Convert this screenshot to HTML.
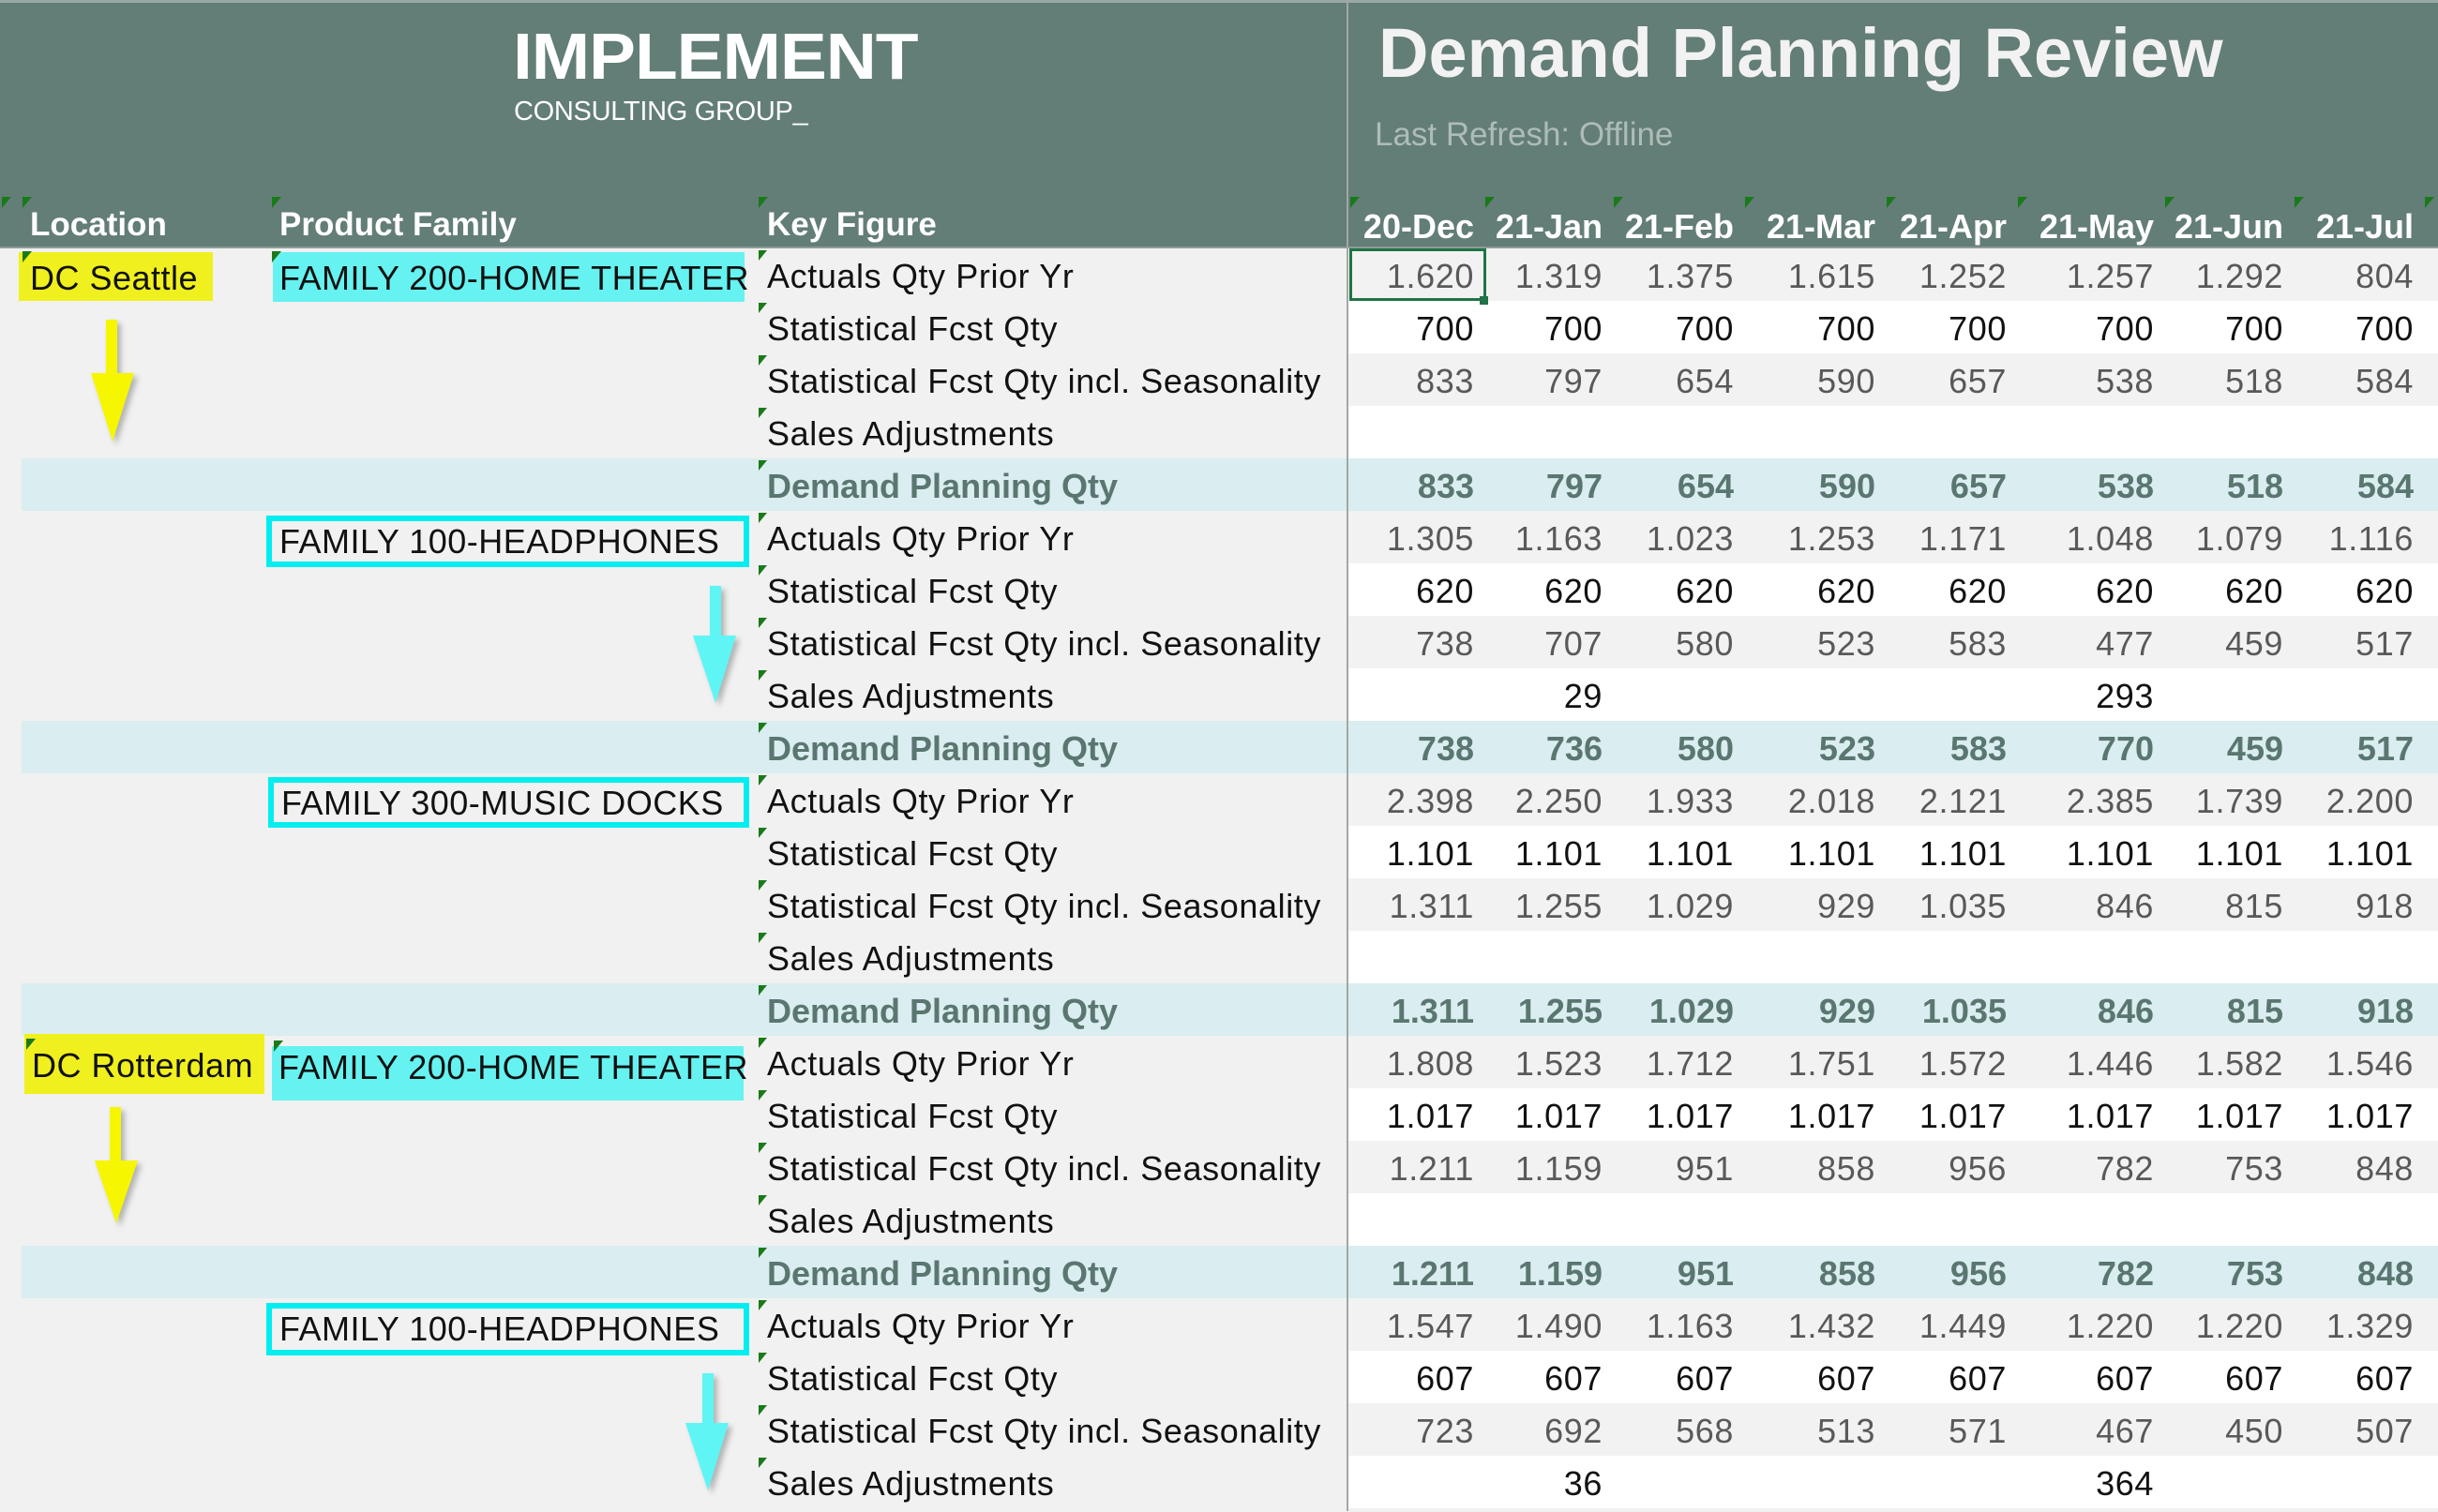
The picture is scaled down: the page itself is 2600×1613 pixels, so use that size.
<!DOCTYPE html>
<html><head><meta charset="utf-8"><style>
*{margin:0;padding:0;box-sizing:border-box}
body{width:2600px;height:1612px;overflow:hidden;background:#f0f1f0;font-family:"Liberation Sans",Arial,sans-serif;position:relative}
.hdr{position:absolute;left:0;top:0;width:2600px;height:265px;background:#637d77;border-top:3px solid #9aa8a4;border-bottom:2px solid #8d9c98}
.abs{position:absolute;white-space:nowrap}
.hl{font-weight:bold;color:#fff;font-size:35px;top:220px}
.row{position:absolute;left:0;width:2600px;height:56px}
.row .r{position:absolute;left:1437px;top:0;width:1163px;height:56px;display:flex;padding-left:3px}
.g .r{background:#f2f2f2}
.w .r{background:#fff}
.d{background:linear-gradient(to right,#f0f1f0 0,#f0f1f0 23px,#daedf0 23px)}
.d .r{background:#daedf0}
.r i{font-style:normal;display:block;text-align:right;padding-right:12px;font-size:36px;letter-spacing:.6px;line-height:60px;height:56px}
.r i:nth-child(1){width:144px}.r i:nth-child(2){width:137px}.r i:nth-child(3){width:140px}.r i:nth-child(4){width:151px}
.r i:nth-child(5){width:140px}.r i:nth-child(6){width:157px}.r i:nth-child(7){width:138px}.r i:nth-child(8){width:139px}
.g i{color:#595959}.w i{color:#111}.d i{color:#5a7670;font-weight:bold;letter-spacing:0}
.k{position:absolute;left:818px;top:0;font-size:36px;letter-spacing:.6px;line-height:60px;color:#111}
.d .k{color:#5a7670;font-weight:bold;letter-spacing:0}
.k::before{content:"";position:absolute;left:-9px;top:2px;border-top:11px solid #1a7a1a;border-right:9px solid transparent}
.tri{position:absolute;border-top:12px solid #1a7a1a;border-right:10px solid transparent}
.box{position:absolute;font-size:36px;letter-spacing:.5px;color:#111;white-space:nowrap}
.cy{border:6px solid #00eef0;background:#f0f1f0}
.vl{position:absolute;left:1436px;top:0;width:2px;height:1612px;background:#a0a8a5}
.mh{color:#fff;font-weight:bold;line-height:52px;letter-spacing:0 !important}
</style></head><body>
<div class="hdr"></div>
<div class="abs" style="left:547px;top:20px;font-size:70px;font-weight:bold;color:#fff;letter-spacing:-1px;transform:scaleX(1.07);transform-origin:left">IMPLEMENT</div>
<div class="abs" style="left:548px;top:103px;font-size:29px;color:#fff;letter-spacing:-0.3px">CONSULTING GROUP_</div>
<div class="abs" style="left:1470px;top:14px;font-size:74px;font-weight:bold;color:#f2f2f2">Demand Planning Review</div>
<div class="abs" style="left:1466px;top:124px;font-size:35px;color:#aebcb7">Last Refresh: Offline</div>
<div class="abs hl" style="left:32px">Location</div>
<div class="abs hl" style="left:298px">Product Family</div>
<div class="abs hl" style="left:818px">Key Figure</div>
<div class="row" style="top:212px;height:50px"><div class="r" style="background:none">
<i class="mh">20-Dec</i><i class="mh">21-Jan</i><i class="mh">21-Feb</i><i class="mh">21-Mar</i><i class="mh">21-Apr</i><i class="mh">21-May</i><i class="mh">21-Jun</i><i class="mh">21-Jul</i></div></div>
<div class="tri" style="left:2px;top:210px"></div><div class="tri" style="left:24px;top:210px"></div><div class="tri" style="left:290px;top:210px"></div><div class="tri" style="left:809px;top:210px"></div>
<div class="tri" style="left:1440px;top:210px"></div><div class="tri" style="left:1584px;top:210px"></div><div class="tri" style="left:1721px;top:210px"></div><div class="tri" style="left:1861px;top:210px"></div><div class="tri" style="left:2012px;top:210px"></div><div class="tri" style="left:2152px;top:210px"></div><div class="tri" style="left:2309px;top:210px"></div><div class="tri" style="left:2447px;top:210px"></div><div class="tri" style="left:2586px;top:210px"></div>

<div class="row g" style="top:265px"><div class="k">Actuals Qty Prior Yr</div><div class="r"><i>1.620</i><i>1.319</i><i>1.375</i><i>1.615</i><i>1.252</i><i>1.257</i><i>1.292</i><i>804</i></div></div>
<div class="row w" style="top:321px"><div class="k">Statistical Fcst Qty</div><div class="r"><i>700</i><i>700</i><i>700</i><i>700</i><i>700</i><i>700</i><i>700</i><i>700</i></div></div>
<div class="row g" style="top:377px"><div class="k">Statistical Fcst Qty incl. Seasonality</div><div class="r"><i>833</i><i>797</i><i>654</i><i>590</i><i>657</i><i>538</i><i>518</i><i>584</i></div></div>
<div class="row w" style="top:433px"><div class="k">Sales Adjustments</div><div class="r"></div></div>
<div class="row d" style="top:489px"><div class="k">Demand Planning Qty</div><div class="r"><i>833</i><i>797</i><i>654</i><i>590</i><i>657</i><i>538</i><i>518</i><i>584</i></div></div>

<div class="row g" style="top:545px"><div class="k">Actuals Qty Prior Yr</div><div class="r"><i>1.305</i><i>1.163</i><i>1.023</i><i>1.253</i><i>1.171</i><i>1.048</i><i>1.079</i><i>1.116</i></div></div>
<div class="row w" style="top:601px"><div class="k">Statistical Fcst Qty</div><div class="r"><i>620</i><i>620</i><i>620</i><i>620</i><i>620</i><i>620</i><i>620</i><i>620</i></div></div>
<div class="row g" style="top:657px"><div class="k">Statistical Fcst Qty incl. Seasonality</div><div class="r"><i>738</i><i>707</i><i>580</i><i>523</i><i>583</i><i>477</i><i>459</i><i>517</i></div></div>
<div class="row w" style="top:713px"><div class="k">Sales Adjustments</div><div class="r"><i></i><i>29</i><i></i><i></i><i></i><i>293</i><i></i><i></i></div></div>
<div class="row d" style="top:769px"><div class="k">Demand Planning Qty</div><div class="r"><i>738</i><i>736</i><i>580</i><i>523</i><i>583</i><i>770</i><i>459</i><i>517</i></div></div>

<div class="row g" style="top:825px"><div class="k">Actuals Qty Prior Yr</div><div class="r"><i>2.398</i><i>2.250</i><i>1.933</i><i>2.018</i><i>2.121</i><i>2.385</i><i>1.739</i><i>2.200</i></div></div>
<div class="row w" style="top:881px"><div class="k">Statistical Fcst Qty</div><div class="r"><i>1.101</i><i>1.101</i><i>1.101</i><i>1.101</i><i>1.101</i><i>1.101</i><i>1.101</i><i>1.101</i></div></div>
<div class="row g" style="top:937px"><div class="k">Statistical Fcst Qty incl. Seasonality</div><div class="r"><i>1.311</i><i>1.255</i><i>1.029</i><i>929</i><i>1.035</i><i>846</i><i>815</i><i>918</i></div></div>
<div class="row w" style="top:993px"><div class="k">Sales Adjustments</div><div class="r"></div></div>
<div class="row d" style="top:1049px"><div class="k">Demand Planning Qty</div><div class="r"><i>1.311</i><i>1.255</i><i>1.029</i><i>929</i><i>1.035</i><i>846</i><i>815</i><i>918</i></div></div>

<div class="row g" style="top:1105px"><div class="k">Actuals Qty Prior Yr</div><div class="r"><i>1.808</i><i>1.523</i><i>1.712</i><i>1.751</i><i>1.572</i><i>1.446</i><i>1.582</i><i>1.546</i></div></div>
<div class="row w" style="top:1161px"><div class="k">Statistical Fcst Qty</div><div class="r"><i>1.017</i><i>1.017</i><i>1.017</i><i>1.017</i><i>1.017</i><i>1.017</i><i>1.017</i><i>1.017</i></div></div>
<div class="row g" style="top:1217px"><div class="k">Statistical Fcst Qty incl. Seasonality</div><div class="r"><i>1.211</i><i>1.159</i><i>951</i><i>858</i><i>956</i><i>782</i><i>753</i><i>848</i></div></div>
<div class="row w" style="top:1273px"><div class="k">Sales Adjustments</div><div class="r"></div></div>
<div class="row d" style="top:1329px"><div class="k">Demand Planning Qty</div><div class="r"><i>1.211</i><i>1.159</i><i>951</i><i>858</i><i>956</i><i>782</i><i>753</i><i>848</i></div></div>

<div class="row g" style="top:1385px"><div class="k">Actuals Qty Prior Yr</div><div class="r"><i>1.547</i><i>1.490</i><i>1.163</i><i>1.432</i><i>1.449</i><i>1.220</i><i>1.220</i><i>1.329</i></div></div>
<div class="row w" style="top:1441px"><div class="k">Statistical Fcst Qty</div><div class="r"><i>607</i><i>607</i><i>607</i><i>607</i><i>607</i><i>607</i><i>607</i><i>607</i></div></div>
<div class="row g" style="top:1497px"><div class="k">Statistical Fcst Qty incl. Seasonality</div><div class="r"><i>723</i><i>692</i><i>568</i><i>513</i><i>571</i><i>467</i><i>450</i><i>507</i></div></div>
<div class="row w" style="top:1553px"><div class="k">Sales Adjustments</div><div class="r"><i></i><i>36</i><i></i><i></i><i></i><i>364</i><i></i><i></i></div></div>

<div class="vl"></div>
<div class="abs" style="left:1439px;top:265px;width:146px;height:56px;border:3px solid #217346"></div>
<div class="abs" style="left:1578px;top:316px;width:9px;height:9px;background:#217346"></div>

<div class="box" style="left:20px;top:269px;width:207px;height:52px;background:#f0f01e;padding-left:12px;line-height:56px">DC Seattle</div>
<div class="box" style="left:291px;top:269px;width:503px;height:53px;background:#66f2f0;padding-left:7px;line-height:56px">FAMILY 200-HOME THEATER</div>
<div class="box cy" style="left:284px;top:550px;width:515px;height:55px;padding-left:8px;line-height:44px">FAMILY 100-HEADPHONES</div>
<div class="box cy" style="left:286px;top:829px;width:513px;height:54px;padding-left:8px;line-height:44px">FAMILY 300-MUSIC DOCKS</div>
<div class="box" style="left:26px;top:1103px;width:256px;height:64px;background:#f0f01e;padding-left:8px;line-height:68px">DC Rotterdam</div>
<div class="box" style="left:290px;top:1116px;width:503px;height:58px;background:#66f2f0;padding-left:7px;line-height:46px">FAMILY 200-HOME THEATER</div>
<div class="box cy" style="left:284px;top:1390px;width:515px;height:56px;padding-left:8px;line-height:44px">FAMILY 100-HEADPHONES</div>
<div class="tri" style="left:24px;top:268px"></div><div class="tri" style="left:290px;top:268px"></div>
<div class="tri" style="left:28px;top:1108px"></div><div class="tri" style="left:292px;top:1110px"></div>

<svg class="abs" style="left:0;top:0" width="900" height="1612">
<defs><filter id="sh" x="-50%" y="-20%" width="200%" height="140%"><feGaussianBlur stdDeviation="3"/></filter></defs>
<g>
<polygon points="113,341 125,341 125,398 143,398 120,471 97,398 113,398" fill="#777" opacity=".5" filter="url(#sh)" transform="translate(4,4)"/>
<polygon points="113,341 125,341 125,398 143,398 120,471 97,398 113,398" fill="#f6f600"/>
<polygon points="757,625 769,625 769,678 785,678 763,750 739,678 757,678" fill="#777" opacity=".5" filter="url(#sh)" transform="translate(4,4)"/>
<polygon points="757,625 769,625 769,678 785,678 763,750 739,678 757,678" fill="#5ff5f5"/>
<g transform="translate(4,840)">
<polygon points="113,341 125,341 125,398 143,398 120,465 97,398 113,398" fill="#777" opacity=".5" filter="url(#sh)" transform="translate(4,4)"/>
<polygon points="113,341 125,341 125,398 143,398 120,465 97,398 113,398" fill="#f6f600"/>
</g>
<g transform="translate(-8,840)">
<polygon points="757,625 769,625 769,678 785,678 763,750 739,678 757,678" fill="#777" opacity=".5" filter="url(#sh)" transform="translate(4,4)"/>
<polygon points="757,625 769,625 769,678 785,678 763,750 739,678 757,678" fill="#5ff5f5"/>
</g>
</g>
</svg>
</body></html>
